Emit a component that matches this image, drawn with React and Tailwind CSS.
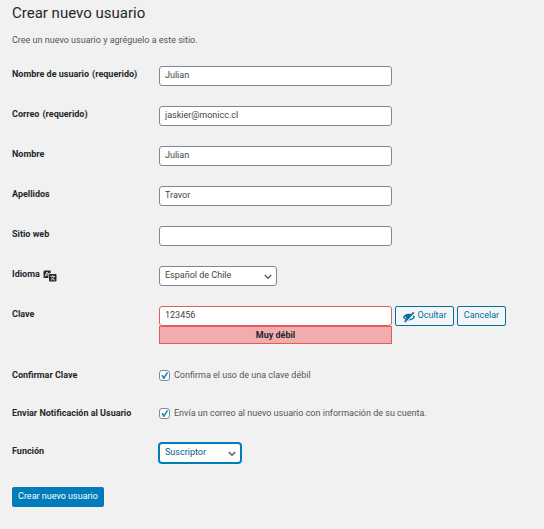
import { useState } from "react";

const control = "h-5 rounded-[3px] border bg-white px-[5px] text-[9px] outline-none";

function Row({ label, note, icon, htmlFor, children }) {
  return (
    <div className="grid grid-cols-[147px_minmax(0,1fr)] items-start">
      <label
        htmlFor={htmlFor}
        className="flex h-4 items-center whitespace-nowrap text-[9px] font-bold leading-4 text-[#23282d]"
      >
        {label}
        {note && <span className="ml-[3px]">{note}</span>}
        {icon}
      </label>
      {children}
    </div>
  );
}

function TextField({ id, label, note, initial }) {
  const [value, setValue] = useState(initial);
  return (
    <Row label={label} note={note} htmlFor={id}>
      <input
        id={id}
        type="text"
        value={value}
        onChange={(e) => setValue(e.target.value)}
        className={`${control} w-full max-w-[233px] border-[#7e8993] pb-[3px] text-[#444]`}
      />
    </Row>
  );
}

function SelectField({ id, options, width, tone }) {
  return (
    <div className={`relative ${width}`}>
      <select id={id} className={`${control} block w-full appearance-none pb-0.5 leading-4 ${tone}`}>
        {options.map((o) => (
          <option key={o}>{o}</option>
        ))}
      </select>
      <svg
        viewBox="0 0 8 6"
        className="pointer-events-none absolute right-[5px] top-2 h-1.5 w-2"
        fill="none"
        stroke="#50575e"
        strokeWidth="1.3"
        aria-hidden="true"
      >
        <path d="M0.8 1 L4 4.3 L7.2 1" />
      </svg>
    </div>
  );
}

function CheckField({ id, text }) {
  return (
    <div className="flex items-center gap-1">
      <span className="relative size-[11px] shrink-0">
        <input
          id={id}
          type="checkbox"
          defaultChecked
          className="peer block size-[11px] appearance-none rounded-[3px] border border-[#7e8993] bg-white"
        />
        <svg
          viewBox="0 0 11 11"
          className="pointer-events-none absolute inset-0 hidden size-[11px] peer-checked:block"
          aria-hidden="true"
        >
          <path d="M2.3 5.5 L3.5 4.8 L4.9 6.5 L7.8 2 L9.2 2.7 L5.3 9 L4.3 9 Z" fill="#1e8cbe" />
        </svg>
      </span>
      <label htmlFor={id} className="text-[9px] leading-4 text-[#555]">
        {text}
      </label>
    </div>
  );
}

function TranslateIcon() {
  return (
    <svg viewBox="0 0 14 12" className="ml-[3px] mt-1 h-3 w-3.5" aria-hidden="true">
      <path d="M1.4 0.5H7.6V3.2H5.4V8H0.5V1.4Z" fill="#23282d" />
      <path d="M2 6.5L4 2L5.2 3.8M2.8 4.9H5" fill="none" stroke="#f1f1f1" strokeWidth="0.9" />
      <rect x="6" y="4" width="7.5" height="7.5" rx="0.7" fill="#23282d" />
      <path d="M7.4 6.4H12.1M9.75 5.2V6.4M10.9 6.8C10.3 8.6 9.3 9.6 7.6 10.2M8.6 7.6C9.2 8.9 10.3 9.8 12 10.2" fill="none" stroke="#f1f1f1" strokeWidth="0.8" />
    </svg>
  );
}

function HiddenIcon() {
  return (
    <svg viewBox="0 0 12 12" className="mt-[3px] size-3" fill="none" stroke="#0071a1" aria-hidden="true">
      <path d="M0.7 6.3C3 2.4 8.8 2.4 11.3 6C9 9.6 3.2 9.8 0.7 6.3Z" strokeWidth="1.3" />
      <ellipse cx="5.4" cy="5.6" rx="2.8" ry="2.7" fill="#0071a1" stroke="none" />
      <path d="M3 11.4L11.6 2.2" stroke="#f3f5f6" strokeWidth="1.2" />
      <path d="M1.8 10.9L10.8 1.2" strokeWidth="1.6" />
    </svg>
  );
}

const sideButton =
  "flex h-5 items-center justify-center gap-[3px] rounded-[2px] border border-[#0071a1] bg-[#f3f5f6] pb-0.5 text-[9px] leading-4 text-[#0071a1]";

export default function App() {
  const [password, setPassword] = useState("123456");
  return (
    <main className="min-h-screen bg-[#f1f1f1] px-3 pb-[22px] pt-0.5 font-[Roboto,sans-serif]">
      <h1 className="text-[15px] leading-[22px] text-[#23282d]">Crear nuevo usuario</h1>
      <p className="mt-2 text-[9px] leading-4 text-[#555]">
        Cree un nuevo usuario y agréguelo a este sitio.
      </p>
      <form className="mt-[18px]" onSubmit={(e) => e.preventDefault()}>
        <div className="flex flex-col gap-5">
          <TextField id="user" label="Nombre de usuario" note="(requerido)" initial="Julian" />
          <TextField id="mail" label="Correo" note="(requerido)" initial="jaskier@monicc.cl" />
          <TextField id="name" label="Nombre" initial="Julian" />
          <TextField id="surname" label="Apellidos" initial="Travor" />
          <TextField id="site" label="Sitio web" initial="" />
          <Row label="Idioma" htmlFor="language" icon={<TranslateIcon />}>
            <SelectField
              id="language"
              options={["Español de Chile", "English"]}
              width="w-[118px]"
              tone="border-[#7e8993] text-[#444]"
            />
          </Row>
          <Row label="Clave" htmlFor="password">
            <div className="flex items-start gap-[3px]">
              <div className="w-[233px] shrink-0">
                <input
                  id="password"
                  type="text"
                  value={password}
                  onChange={(e) => setPassword(e.target.value)}
                  className={`${control} block w-full border-[#e35b5b] pb-[3px] text-[#444]`}
                />
                <div className="h-[18px] border border-[#e35b5b] bg-[#f1adad] text-center text-[9px] font-bold leading-4 text-[#23282d]">
                  Muy débil
                </div>
              </div>
              <button type="button" className={`${sideButton} w-[59px]`}>
                <HiddenIcon />
                Ocultar
              </button>
              <button type="button" className={`${sideButton} w-[49px]`}>
                Cancelar
              </button>
            </div>
          </Row>
        </div>
        <div className="mt-[23px] flex flex-col gap-[22px]">
          <Row label="Confirmar Clave" htmlFor="weak">
            <CheckField id="weak" text="Confirma el uso de una clave débil" />
          </Row>
          <Row label="Enviar Notificación al Usuario" htmlFor="notify">
            <CheckField
              id="notify"
              text="Envía un correo al nuevo usuario con información de su cuenta."
            />
          </Row>
          <Row label="Función" htmlFor="role">
            <SelectField
              id="role"
              options={["Suscriptor", "Colaborador", "Autor", "Editor", "Administrador"]}
              width="w-[82px]"
              tone="border-[#007cba] text-[#016087] ring-1 ring-[#007cba]"
            />
          </Row>
        </div>
        <button
          type="submit"
          className="mt-6 flex h-5 w-[92px] items-center justify-center rounded-[2px] bg-[#007cba] pb-0.5 text-[9px] leading-4 text-white"
        >
          Crear nuevo usuario
        </button>
      </form>
    </main>
  );
}
